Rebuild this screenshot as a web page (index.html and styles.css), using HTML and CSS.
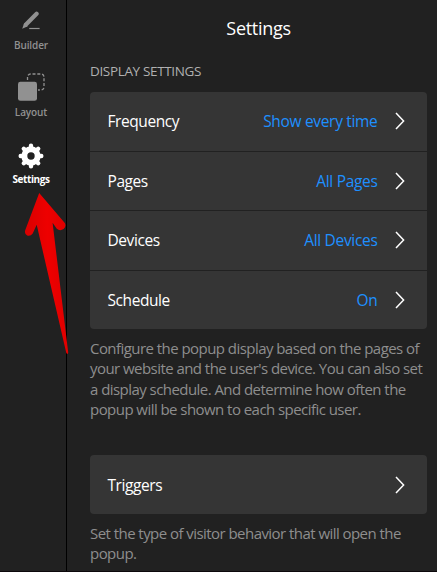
FILE: index.html
```html
<!DOCTYPE html>
<html lang="en">
<head>
<meta charset="utf-8">
<title>Settings</title>
<link rel="stylesheet" href="styles.css">
</head>
<body>
<div class="app">
  <nav class="sidebar">
    <a class="tab builder">
      <svg width="20" height="20" viewBox="0 0 20 20"><path d="M5 13.4 15.6 2.8" stroke="currentColor" stroke-width="4.2" stroke-linecap="round"/><path d="M3.2 12 1.2 17.8 6.8 15.2Z" fill="currentColor"/><path d="M8.2 17.5h10.4" stroke="currentColor" stroke-width="1.2"/></svg>
      <span>Builder</span>
    </a>
    <a class="tab layout">
      <svg width="28" height="28" viewBox="0 0 28 28"><path d="M10.5 7V4a3 3 0 0 1 3-3H24a3 3 0 0 1 3 3v10a3 3 0 0 1-3 3h-3" fill="none" stroke="currentColor" stroke-width="1.3" stroke-dasharray="3 1.8"/><rect x="1" y="8.8" width="19" height="19" rx="2.4" fill="currentColor"/></svg>
      <span>Layout</span>
    </a>
    <a class="tab settings active">
      <svg width="26" height="26" viewBox="-13 -13 26 26"><circle r="6.7" fill="none" stroke="currentColor" stroke-width="6"/><g stroke="currentColor" stroke-width="4.4" stroke-linecap="round"><path d="M0-8V-10.3M0 8V10.3M-8 0H-10.3M8 0H10.3M5.7-5.7 7.2-7.2M-5.7 5.7-7.2 7.2M-5.7-5.7-7.2-7.2M5.7 5.7 7.2 7.2"/></g></svg>
      <span>Settings</span>
    </a>
    <svg class="arrow" width="50" height="170" viewBox="0 0 50 170"><defs><linearGradient id="red" x1="0" x2="1" y1=".1" y2="0"><stop offset="0" stop-color="#d90000"/><stop offset=".5" stop-color="#ee0000"/><stop offset="1" stop-color="#dc0000"/></linearGradient></defs><path d="M19.2 3 44.8 33Q46.6 36.5 43.6 39Q40 41.4 36.8 38.8L32.6 32.8 48.2 162.5Q47.8 165 46.3 163L16.7 34.8 12.7 43.4Q10.5 46.4 7.2 45.4Q4 43.6 5.3 40Z" fill="url(#red)"/></svg>
  </nav>
  <main class="panel">
    <h1>Settings</h1>
    <h2>DISPLAY SETTINGS</h2>
    <section class="card">
      <div class="row"><span class="label">Frequency</span><span class="value">Show every time</span><svg class="chevron" viewBox="0 0 10 18"><path d="M1 1 8.6 9 1 17"/></svg></div>
      <div class="row"><span class="label">Pages</span><span class="value">All Pages</span><svg class="chevron" viewBox="0 0 10 18"><path d="M1 1 8.6 9 1 17"/></svg></div>
      <div class="row"><span class="label">Devices</span><span class="value">All Devices</span><svg class="chevron" viewBox="0 0 10 18"><path d="M1 1 8.6 9 1 17"/></svg></div>
      <div class="row"><span class="label">Schedule</span><span class="value">On</span><svg class="chevron" viewBox="0 0 10 18"><path d="M1 1 8.6 9 1 17"/></svg></div>
    </section>
    <p class="help">Configure the popup display based on the pages of<br>your website and the user's device. You can also set<br>a display schedule. And determine how often the<br>popup will be shown to each specific user.</p>
    <section class="card triggers">
      <div class="row"><span class="label">Triggers</span><svg class="chevron" viewBox="0 0 10 18"><path d="M1 1 8.6 9 1 17"/></svg></div>
    </section>
    <p class="help">Set the type of visitor behavior that will open the<br>popup.</p>
  </main>
</div>
</body>
</html>
```
FILE: styles.css
```css
* { box-sizing: border-box; }
body { margin: 0; background: #212121; color: #fff; font-family: "Open Sans", "Noto Sans", sans-serif; }
.app { display: flex; height: 572px; overflow: hidden; border-bottom: 1px solid #0c080b; }
.sidebar { position: relative; width: 67px; flex: none; border-right: 1px solid #000; }
.tab { display: flex; flex-direction: column; align-items: center; width: 62px; height: 68px; color: #919191; font-size: 10px; font-weight: 600; line-height: 14px; letter-spacing: -0.1px; }
.tab svg { flex: none; }
.builder { padding-top: 11px; }
.builder svg { margin-bottom: 7px; }
.layout { padding-top: 5px; }
.layout svg { margin-bottom: 4px; }
.settings { padding-top: 7px; }
.settings svg { margin-bottom: 3px; }
.active { color: #fff; font-weight: 700; letter-spacing: -0.4px; }
.arrow { position: absolute; left: 20px; top: 190px; z-index: 1; }
.panel { flex: 1; padding: 0 10px 0 23px; white-space: nowrap; }
h1 { margin: 16px 0 0; text-align: center; font-size: 18px; line-height: 24px; font-weight: 400; letter-spacing: -0.3px; }
h2 { margin: 22px 0 0; font-size: 13.5px; line-height: 18px; font-weight: 400; color: #b0b0b0; letter-spacing: -0.35px; }
.card { display: flex; flex-direction: column; margin-top: 12px; height: 237px; border-radius: 4px; background: #353535; }
.row { display: flex; flex: 1; align-items: center; padding: 0 22.5px 0 17.5px; font-size: 15.5px; }
.row + .row { border-top: 1px solid #212121; }
.label { flex: 1; letter-spacing: -0.43px; }
.value { color: #1e90ff; letter-spacing: -0.32px; }
.chevron { width: 10px; height: 18px; margin-left: 17px; fill: none; stroke: #fff; stroke-width: 1.5; }
.help { margin: 9px 0 0; font-size: 15px; line-height: 20.3px; color: #8e8e8e; letter-spacing: -0.55px; }
.triggers { height: 59px; margin-top: 36px; }
```
